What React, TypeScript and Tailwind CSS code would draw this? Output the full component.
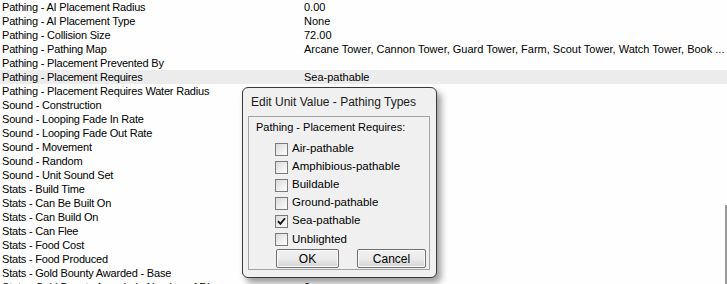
const ROWS: [string, string][] = [
  ["Pathing - AI Placement Radius", "0.00"],
  ["Pathing - AI Placement Type", "None"],
  ["Pathing - Collision Size", "72.00"],
  [
    "Pathing - Pathing Map",
    "Arcane Tower, Cannon Tower, Guard Tower, Farm, Scout Tower, Watch Tower, Book ...",
  ],
  ["Pathing - Placement Prevented By", ""],
  ["Pathing - Placement Requires", "Sea-pathable"],
  ["Pathing - Placement Requires Water Radius", "0.00"],
  ["Sound - Construction", ""],
  ["Sound - Looping Fade In Rate", ""],
  ["Sound - Looping Fade Out Rate", ""],
  ["Sound - Movement", ""],
  ["Sound - Random", ""],
  ["Sound - Unit Sound Set", ""],
  ["Stats - Build Time", ""],
  ["Stats - Can Be Built On", ""],
  ["Stats - Can Build On", ""],
  ["Stats - Can Flee", ""],
  ["Stats - Food Cost", ""],
  ["Stats - Food Produced", ""],
  ["Stats - Gold Bounty Awarded - Base", ""],
  ["Stats - Gold Bounty Awarded - Number of Dice", "0"],
];

const OPTIONS = [
  { label: "Air-pathable", checked: false },
  { label: "Amphibious-pathable", checked: false },
  { label: "Buildable", checked: false },
  { label: "Ground-pathable", checked: false },
  { label: "Sea-pathable", checked: true },
  { label: "Unblighted", checked: false },
];

function CheckBox({ checked }: { checked: boolean }) {
  return (
    <span className="flex h-[13px] w-[13px] shrink-0 items-center justify-center border border-[#7a7a7a] bg-gradient-to-br from-[#dadada] to-white">
      {checked && (
        <svg width="9" height="9" viewBox="0 0 9 9">
          <path d="M1 4.2 L3.4 6.8 L8 1.2" fill="none" stroke="#111" strokeWidth="1.8" />
        </svg>
      )}
    </span>
  );
}

function Button({ label, width }: { label: string; width: string }) {
  return (
    <div
      className={`flex h-[19px] items-center justify-center rounded-[2px] border border-[#707070] bg-gradient-to-b from-[#f2f2f2] via-[#ebebeb] to-[#d6d6d6] shadow-[inset_0_0_0_1px_#fcfcfc] ${width}`}
    >
      {label}
    </div>
  );
}

export default function App() {
  return (
    <div className="relative h-[284px] w-[727px] overflow-hidden bg-[#fdfefd] font-['Liberation_Sans',Arial,sans-serif] text-[11px] text-black">
      <div className="flex flex-col">
        {ROWS.map(([name, value], i) => (
          <div
            key={name}
            className={`flex h-[14px] items-center leading-[14px] ${i === 5 ? "bg-[#ececec]" : ""}`}
          >
            <span className="w-[304px] shrink-0 whitespace-nowrap pl-[2px] tracking-[-0.2px]">{name}</span>
            <span className="whitespace-nowrap">{value}</span>
          </div>
        ))}
      </div>
      <div className="absolute right-0 top-[205px] h-[79px] w-[2px] bg-[#9a9a9a]" />

      <div className="absolute left-[242px] top-[87px] flex h-[191px] w-[195px] flex-col rounded-[6px] border border-[#3a3a3a] bg-[#f0f0f0] shadow-[4px_5px_7px_rgba(0,0,0,0.4)]">
        <div className="flex h-[28px] items-center pl-[8px] text-[12px] text-[#1a1a1a]">
          Edit Unit Value - Pathing Types
        </div>
        <div className="ml-[5px] flex h-[154px] w-[182px] flex-col border border-[#a3a3a3] pt-[3px]">
          <div className="h-[14px] pl-[7px] leading-[14px]">Pathing - Placement Requires:</div>
          <div className="mt-[6px] flex flex-col pl-[26px]">
            {OPTIONS.map((o) => (
              <div key={o.label} className="flex h-[18px] items-center gap-[4px] text-[11.5px] last:h-[19px]">
                <CheckBox checked={o.checked} />
                <span>{o.label}</span>
              </div>
            ))}
          </div>
          <div className="flex gap-[18px] pl-[27px] text-[12px]">
            <Button label="OK" width="w-[63px]" />
            <Button label="Cancel" width="w-[69px]" />
          </div>
        </div>
      </div>
    </div>
  );
}
